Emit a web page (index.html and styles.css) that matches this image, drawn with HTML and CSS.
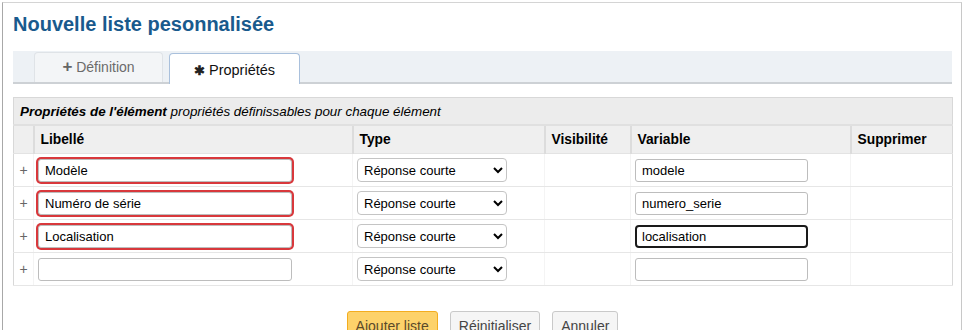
FILE: index.html
```html
<!DOCTYPE html>
<html lang="fr">
<head>
<meta charset="utf-8">
<title>Nouvelle liste pesonnalisée</title>
<link rel="stylesheet" href="styles.css">
</head>
<body>
<div class="panel">
  <h1 class="title">Nouvelle liste pesonnalisée</h1>
  <div class="tabbar">
    <div class="tab"><span class="tab-icon">+</span> Définition</div>
    <div class="tab active"><span class="tab-icon star">✱</span> Propriétés</div>
  </div>
  <table class="props">
    <colgroup>
      <col class="c0"><col class="c1"><col class="c2"><col class="c3"><col class="c4"><col class="c5">
    </colgroup>
    <thead>
      <tr class="caption-row"><th colspan="6"><b>Propriétés de l'élément</b> propriétés définissables pour chaque élément</th></tr>
      <tr class="head-row"><th></th><th>Libellé</th><th>Type</th><th>Visibilité</th><th>Variable</th><th>Supprimer</th></tr>
    </thead>
    <tbody>
      <tr>
        <td class="plus">+</td>
        <td><input class="txt lbl err" type="text" value="Modèle"></td>
        <td><select class="sel"><option>Réponse courte</option></select></td>
        <td></td>
        <td><input class="txt var" type="text" value="modele"></td>
        <td></td>
      </tr>
      <tr>
        <td class="plus">+</td>
        <td><input class="txt lbl err" type="text" value="Numéro de série"></td>
        <td><select class="sel"><option>Réponse courte</option></select></td>
        <td></td>
        <td><input class="txt var" type="text" value="numero_serie"></td>
        <td></td>
      </tr>
      <tr>
        <td class="plus">+</td>
        <td><input class="txt lbl err" type="text" value="Localisation"></td>
        <td><select class="sel"><option>Réponse courte</option></select></td>
        <td></td>
        <td><input class="txt var focus" type="text" value="localisation"></td>
        <td></td>
      </tr>
      <tr>
        <td class="plus">+</td>
        <td><input class="txt lbl" type="text" value=""></td>
        <td><select class="sel"><option>Réponse courte</option></select></td>
        <td></td>
        <td><input class="txt var" type="text" value=""></td>
        <td></td>
      </tr>
    </tbody>
  </table>
  <div class="actions">
    <button class="btn primary">Ajouter liste</button>
    <button class="btn">Réinitialiser</button>
    <button class="btn">Annuler</button>
  </div>
</div>
</body>
</html>
```
FILE: styles.css
```css
html, body {
  margin: 0;
  padding: 0;
  background: #fff;
  font-family: "Liberation Sans", Arial, sans-serif;
  font-size: 13px;
  color: #000;
  overflow: hidden;
}
body {
  padding: 2px 0 0 2px;
}
.panel {
  width: 939px;
  height: 400px;
  border-left: 1px solid #a8a8a8;
  border-top: 1px solid #d4d4d4;
  border-right: 1px solid #c8c8c8;
  padding: 0 9px 0 10px;
}
.title {
  margin: 0;
  padding-top: 9px;
  font-size: 20px;
  line-height: 24px;
  font-weight: bold;
  color: #195a8d;
}
.tabbar {
  margin-top: 15px;
  height: 31px;
  background: #edf1f5;
  border-bottom: 2px solid #cdd1d5;
  display: flex;
  align-items: flex-end;
  padding-left: 21px;
  gap: 6px;
}
.tab {
  height: 30px;
  width: 129px;
  box-sizing: border-box;
  border: 1px solid #dfe3e7;
  border-bottom: none;
  border-radius: 4px 4px 0 0;
  background: #f3f5f7;
  color: #6b6b6b;
  font-size: 14px;
  line-height: 28px;
  text-align: center;
}
.tab.active {
  width: 131px;
  margin-bottom: -2px;
  height: 31px;
  background: #fff;
  border: 1px solid #a9c0dc;
  border-bottom: none;
  color: #111;
  line-height: 33px;
  font-size: 14.5px;
}
.tab-icon {
  font-weight: bold;
  font-size: 17px;
  color: #666;
}
.tab-icon.star {
  font-size: 13px;
  color: #222;
}
.props {
  margin-top: 13px;
  width: 939px;
  border-collapse: collapse;
  table-layout: fixed;
  border: 1px solid #d8d8d8;
}
.c0 { width: 20px; }
.c1 { width: 319px; }
.c2 { width: 192px; }
.c3 { width: 86px; }
.c4 { width: 220px; }
.c5 { width: 102px; }
.caption-row th {
  height: 26px;
  padding: 0 6px;
  background: #ececec;
  text-align: left;
  font-weight: normal;
  font-style: italic;
  font-size: 13.4px;
  border-bottom: 2px solid #e0e0e0;
}
.caption-row b {
  font-weight: bold;
}
.head-row th {
  height: 27px;
  padding: 0 6px;
  background: #efefef;
  text-align: left;
  font-weight: bold;
  font-size: 13.8px;
  border-left: 2px solid #dcdcdc;
  border-bottom: 1px solid #e3e3e3;
}
.head-row th:first-child {
  border-left: none;
}
tbody td {
  height: 32px;
  padding: 0 4px;
  border-bottom: 1px solid #e6e6e6;
  border-left: 1px solid #f4f4f4;
  vertical-align: middle;
}
tbody td:first-child {
  border-left: none;
}
td.plus {
  padding: 0;
  text-align: center;
  color: #666;
  font-size: 14px;
}
.txt {
  display: block;
  box-sizing: border-box;
  height: 23px;
  padding: 0 6px;
  border: 1px solid #bdbdbd;
  border-radius: 3px;
  font-family: "Liberation Sans", Arial, sans-serif;
  font-size: 13px;
  color: #000;
  background: #fff;
  outline: none;
}
.lbl {
  width: 254px;
}
.var {
  width: 173px;
}
.err {
  box-shadow: 0 0 0 2px #d8383c;
}
.focus {
  border: 2px solid #1a1a1a;
  border-radius: 4px;
  padding: 0 5px;
}
.sel {
  display: block;
  width: 150px;
  height: 24px;
  box-sizing: border-box;
  border: 1px solid #c4c4c4;
  border-radius: 4px;
  background: #fff;
  font-family: "Liberation Sans", Arial, sans-serif;
  font-size: 13px;
  color: #000;
  padding: 0 2px;
}
.actions {
  margin-top: 25px;
  display: flex;
  justify-content: center;
  gap: 12px;
}
.btn {
  font-family: "Liberation Sans", Arial, sans-serif;
  font-size: 14px;
  color: #444;
  background: #f5f5f5;
  border: 1px solid #c9c9c9;
  border-radius: 3px;
  padding: 4px 8px;
  line-height: 20px;
}
.btn.primary {
  background: #fdd26a;
  border: 1px solid #f3ad1f;
  color: #5a4a2a;
}
```
